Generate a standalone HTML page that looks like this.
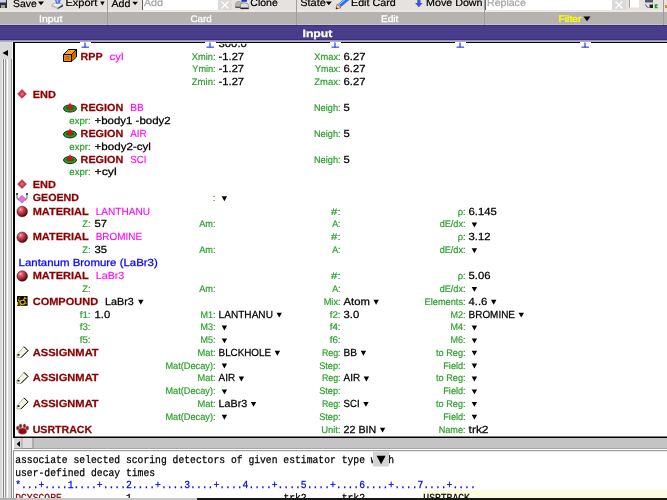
<!DOCTYPE html>
<html><head><meta charset="utf-8"><style>
html,body{margin:0;padding:0;width:667px;height:500px;overflow:hidden;background:#fff}
svg{display:block;text-rendering:geometricPrecision;will-change:transform}
</style></head><body>
<svg width="667" height="500" viewBox="0 0 667 500">
<rect x="0" y="0" width="667" height="500" fill="#ffffff"/>
<rect x="0" y="0" width="667" height="12" fill="#e6e2e0"/>
<rect x="0" y="10.5" width="667" height="1" fill="#f0eeec"/>
<rect x="0" y="12" width="667" height="12" fill="#b6b2b0"/>
<rect x="0" y="24" width="667" height="1" fill="#c8c6bc"/>
<rect x="0" y="25" width="667" height="15" fill="#483d8b"/>
<rect x="0" y="25" width="667" height="1" fill="#3a2d88"/>
<rect x="0" y="39" width="667" height="1" fill="#3a2d88"/>
<rect x="0" y="40" width="667" height="1" fill="#9890d0"/>
<rect x="0" y="41" width="667" height="1" fill="#b4b2a8"/>
<rect x="0" y="42" width="13" height="458" fill="#d9d9d9"/>
<rect x="12" y="42" width="1" height="17" fill="#f4f4f4"/>
<rect x="2" y="59" width="1" height="441" fill="#f0f0f0"/>
<rect x="3" y="59" width="1" height="441" fill="#808080"/>
<rect x="4" y="59" width="1" height="441" fill="#f8f8f8"/>
<rect x="5" y="59" width="1" height="441" fill="#a0a0a0"/>
<rect x="7" y="59" width="1" height="441" fill="#ffffff"/>
<rect x="8" y="59" width="1" height="441" fill="#dcdcdc"/>
<rect x="9" y="59" width="1" height="441" fill="#dcdcdc"/>
<rect x="11" y="59" width="1" height="441" fill="#909090"/>
<rect x="12" y="59" width="1" height="441" fill="#ffffff"/>
<path d="M2.5 53L8 50V56Z" fill="#000"/>
<rect x="13" y="42" width="654" height="1" fill="#000"/>
<rect x="13" y="42" width="2" height="396" fill="#000"/>
<rect x="13" y="436.5" width="654" height="1.5" fill="#000"/>
<rect x="80" y="42" width="11" height="1" fill="#fff"/>
<rect x="84.4" y="42.5" width="1.2" height="5" fill="#2038ff"/>
<rect x="81.5" y="46.6" width="7.6" height="1.1" fill="#2038ff"/>
<rect x="205" y="42" width="11" height="1" fill="#fff"/>
<rect x="209.4" y="42.5" width="1.2" height="5" fill="#2038ff"/>
<rect x="206.5" y="46.6" width="7.6" height="1.1" fill="#2038ff"/>
<rect x="330" y="42" width="11" height="1" fill="#fff"/>
<rect x="334.4" y="42.5" width="1.2" height="5" fill="#2038ff"/>
<rect x="331.5" y="46.6" width="7.6" height="1.1" fill="#2038ff"/>
<rect x="455" y="42" width="11" height="1" fill="#fff"/>
<rect x="459.4" y="42.5" width="1.2" height="5" fill="#2038ff"/>
<rect x="456.5" y="46.6" width="7.6" height="1.1" fill="#2038ff"/>
<rect x="580" y="42" width="11" height="1" fill="#fff"/>
<rect x="584.4" y="42.5" width="1.2" height="5" fill="#2038ff"/>
<rect x="581.5" y="46.6" width="7.6" height="1.1" fill="#2038ff"/>
<rect x="14" y="438" width="653" height="11" fill="#c4c4c4"/>
<rect x="14" y="448" width="653" height="1" fill="#a8a8a8"/>
<rect x="14" y="438" width="8" height="11" fill="#d8d8d8"/>
<path d="M16.7 444L20 441V447Z" fill="#000"/>
<rect x="21.5" y="438" width="1" height="11" fill="#909090"/>
<rect x="22.5" y="438" width="10" height="10" fill="#dcdcdc"/>
<rect x="32.5" y="438" width="1" height="11" fill="#909090"/>
<rect x="22.5" y="448" width="10" height="1" fill="#909090"/>
<rect x="14" y="448" width="8" height="1" fill="#a0a0a0"/>
<rect x="13" y="449" width="654" height="1" fill="#ffffff"/>
<rect x="13" y="450" width="654" height="1.5" fill="#a0a0a0"/>
<rect x="13" y="451.5" width="654" height="47.5" fill="#ffffff"/>
<rect x="13" y="451" width="1" height="48" fill="#909090"/>
<rect x="423" y="490" width="244" height="8.5" fill="#fdfbe0"/>
<rect x="0" y="499" width="197" height="1" fill="#c0c0c0"/>
<rect x="197" y="499" width="470" height="1" fill="#202020"/>
<rect x="0" y="0" width="7" height="8" fill="#303030"/><rect x="0" y="0" width="6" height="2.5" fill="#c8d0f0"/><rect x="1" y="5" width="4" height="3" fill="#a0a0a0"/>
<text x="13.00" y="6.60" font-family='"Liberation Sans",sans-serif' font-size="10.19" fill="#000" text-anchor="start" textLength="23.81" lengthAdjust="spacingAndGlyphs" xml:space="preserve" stroke="#000" stroke-width="0.2">Save</text>
<path d="M38.00 1.60h6.00l-3.00 3.60z" fill="#000"/>
<path d="M51.5 5L56.5 2.5L63 4.5L57.5 8Z" fill="#ececec" stroke="#a0a0a0" stroke-width="0.6"/><path d="M57.5 8L63 4.5V6.5L57.5 9.2Z" fill="#484848"/><path d="M51.5 5V6.2L57.5 9.2V8Z" fill="#b8b8b8"/><path d="M55 0H60.8L59.5 3.8H56.2Z" fill="#5a70e0"/><path d="M56.5 0H58.5L58 2.5H57Z" fill="#a8c0ff"/>
<text x="65.50" y="5.90" font-family='"Liberation Sans",sans-serif' font-size="10.19" fill="#000" text-anchor="start" textLength="31.75" lengthAdjust="spacingAndGlyphs" xml:space="preserve" stroke="#000" stroke-width="0.2">Export</text>
<path d="M100.20 1.50h4.40l-2.20 4.00z" fill="#000"/>
<rect x="107" y="0" width="1" height="25" fill="#a09c9a"/>
<text x="111.50" y="6.60" font-family='"Liberation Sans",sans-serif' font-size="10.19" fill="#000" text-anchor="start" textLength="18.95" lengthAdjust="spacingAndGlyphs" xml:space="preserve" stroke="#000" stroke-width="0.2">Add</text>
<path d="M132.20 1.70h5.80l-2.90 3.40z" fill="#000"/>
<rect x="142" y="0" width="76" height="10" fill="#ffffff"/>
<rect x="142" y="0" width="1" height="10" fill="#606060"/>
<text x="144.00" y="6.30" font-family='"Liberation Sans",sans-serif' font-size="10.19" fill="#a8a8a8" text-anchor="start" textLength="18.95" lengthAdjust="spacingAndGlyphs" xml:space="preserve" stroke="#a8a8a8" stroke-width="0.25">Add</text>
<rect x="218" y="0" width="14" height="10" fill="#dcdad8"/>
<path d="M221.5 1.5L228.5 8.5M228.5 1.5L221.5 8.5" stroke="#ffffff" stroke-width="1.2"/>
<path d="M235.5 7.6V4Q235.5 1.4 239 1.4Q242.6 1.4 242.6 4V7.6Z" fill="#b4b4b4" stroke="#808080" stroke-width="0.5"/><rect x="235.5" y="6.6" width="7" height="1.2" fill="#404040"/><path d="M240.5 8.8V5.6Q240.5 2.8 244.6 2.8Q248.6 2.8 248.6 5.6V8.8Z" fill="#dcdcdc" stroke="#707070" stroke-width="0.6"/><rect x="240.5" y="7.6" width="8.1" height="1.4" fill="#202020"/><rect x="241.5" y="0" width="5.4" height="1.8" fill="#1a30d0"/>
<text x="250.30" y="5.90" font-family='"Liberation Sans",sans-serif' font-size="10.19" fill="#000" text-anchor="start" textLength="27.52" lengthAdjust="spacingAndGlyphs" xml:space="preserve" stroke="#000" stroke-width="0.2">Clone</text>
<rect x="296" y="0" width="1" height="25" fill="#a09c9a"/>
<text x="300.20" y="6.10" font-family='"Liberation Sans",sans-serif' font-size="10.19" fill="#000" text-anchor="start" textLength="25.68" lengthAdjust="spacingAndGlyphs" xml:space="preserve" stroke="#000" stroke-width="0.2">State</text>
<path d="M325.80 1.60h6.00l-3.00 3.60z" fill="#000"/>
<path d="M339.5 5.5L348 -1.5" stroke="#2a70e8" stroke-width="4.2"/><path d="M339 4.5L346.5 -1.5" stroke="#a8d8ff" stroke-width="1"/><path d="M336 9L337.2 4.2L341 7.6Z" fill="#f0e0c0" stroke="#a06020" stroke-width="0.8"/><path d="M336 9L336.6 7.2L338 8.2Z" fill="#000"/>
<text x="351.00" y="5.80" font-family='"Liberation Sans",sans-serif' font-size="10.19" fill="#000" text-anchor="start" textLength="44.73" lengthAdjust="spacingAndGlyphs" xml:space="preserve" stroke="#000" stroke-width="0.2">Edit Card</text>
<path d="M417.3 0H420.5V3H422.6L418.9 7.3L415 3H417.3Z" fill="#3858e0"/>
<text x="426.00" y="5.90" font-family='"Liberation Sans",sans-serif' font-size="10.19" fill="#000" text-anchor="start" textLength="56.58" lengthAdjust="spacingAndGlyphs" xml:space="preserve" stroke="#000" stroke-width="0.2">Move Down</text>
<rect x="484" y="0" width="1" height="25" fill="#a09c9a"/>
<rect x="485" y="0" width="127" height="10" fill="#ffffff"/>
<rect x="485" y="0" width="1" height="10" fill="#606060"/>
<text x="487.00" y="6.30" font-family='"Liberation Sans",sans-serif' font-size="10.19" fill="#a8a8a8" text-anchor="start" textLength="38.80" lengthAdjust="spacingAndGlyphs" xml:space="preserve" stroke="#a8a8a8" stroke-width="0.25">Replace</text>
<rect x="612" y="0" width="14" height="10" fill="#dcdad8"/>
<path d="M615.5 1.5L622.5 8.5M622.5 1.5L615.5 8.5" stroke="#ffffff" stroke-width="1.2"/>
<rect x="629" y="0" width="10" height="7.5" fill="#ffffff"/>
<rect x="629" y="0" width="1" height="7.5" fill="#a0a0a0"/>
<rect x="645" y="0" width="8" height="2.5" fill="#505868"/><path d="M645.5 4.5Q646 7 648.5 7.5" stroke="#3050a0" stroke-width="1" fill="none"/><rect x="649.5" y="4.5" width="3.5" height="3.5" fill="#202020"/><path d="M657.5 5H655.5V7.5H657.5" stroke="#10a010" stroke-width="1.5" fill="none"/>
<rect x="663" y="0" width="1" height="25" fill="#a09c9a"/>
<rect x="665" y="5" width="2" height="3" fill="#e08020"/>
<text x="39.00" y="22.00" font-family='"Liberation Sans",sans-serif' font-size="9.45" fill="#ffffff" text-anchor="start" textLength="23.30" lengthAdjust="spacingAndGlyphs" xml:space="preserve" stroke="#ffffff" stroke-width="0.3">Input</text>
<text x="190.50" y="22.00" font-family='"Liberation Sans",sans-serif' font-size="9.45" fill="#ffffff" text-anchor="start" textLength="21.21" lengthAdjust="spacingAndGlyphs" xml:space="preserve" stroke="#ffffff" stroke-width="0.3">Card</text>
<text x="381.00" y="22.00" font-family='"Liberation Sans",sans-serif' font-size="9.45" fill="#ffffff" text-anchor="start" textLength="17.43" lengthAdjust="spacingAndGlyphs" xml:space="preserve" stroke="#ffffff" stroke-width="0.3">Edit</text>
<text x="558.50" y="22.00" font-family='"Liberation Sans",sans-serif' font-size="9.45" fill="#ffff00" text-anchor="start" textLength="22.94" lengthAdjust="spacingAndGlyphs" xml:space="preserve" stroke="#ffff00" stroke-width="0.3">Filter</text>
<path d="M583.50 16.60h7.00l-3.50 4.60z" fill="#000"/>
<text x="302.50" y="36.60" font-family='"Liberation Sans",sans-serif' font-size="10.50" font-weight="bold" fill="#ffffff" text-anchor="start" textLength="29.90" lengthAdjust="spacingAndGlyphs" xml:space="preserve" stroke="#ffffff" stroke-width="0.25">Input</text>
<defs><clipPath id="cc"><rect x="15" y="43.8" width="652" height="392.7"/></clipPath><clipPath id="tc"><rect x="14" y="451.5" width="653" height="46.5"/></clipPath></defs>
<g clip-path="url(#cc)">
<text x="218.60" y="46.62" font-family='"Liberation Sans",sans-serif' font-size="10.34" fill="#000" text-anchor="start" textLength="28.20" lengthAdjust="spacingAndGlyphs" xml:space="preserve" stroke="#000" stroke-width="0.25">300.0</text>
<text x="80.60" y="59.50" font-family='"Liberation Sans",sans-serif' font-size="10.34" font-weight="bold" fill="#8b0000" text-anchor="start" textLength="22.02" lengthAdjust="spacingAndGlyphs" xml:space="preserve" stroke="#8b0000" stroke-width="0.25">RPP</text>
<text x="109.62" y="59.50" font-family='"Liberation Sans",sans-serif' font-size="10.34" fill="#ff00ff" text-anchor="start" textLength="13.98" lengthAdjust="spacingAndGlyphs" xml:space="preserve" stroke="#ff00ff" stroke-width="0.12">cyl</text>
<text x="215.60" y="59.50" font-family='"Liberation Sans",sans-serif' font-size="9.60" fill="#2aa02a" text-anchor="end" textLength="23.84" lengthAdjust="spacingAndGlyphs" xml:space="preserve" stroke="#2aa02a" stroke-width="0.18">Xmin:</text>
<text x="218.60" y="59.50" font-family='"Liberation Sans",sans-serif' font-size="10.34" fill="#000" text-anchor="start" textLength="25.49" lengthAdjust="spacingAndGlyphs" xml:space="preserve" stroke="#000" stroke-width="0.25">-1.27</text>
<text x="340.60" y="59.50" font-family='"Liberation Sans",sans-serif' font-size="9.60" fill="#2aa02a" text-anchor="end" textLength="26.25" lengthAdjust="spacingAndGlyphs" xml:space="preserve" stroke="#2aa02a" stroke-width="0.18">Xmax:</text>
<text x="343.60" y="59.50" font-family='"Liberation Sans",sans-serif' font-size="10.34" fill="#000" text-anchor="start" textLength="21.93" lengthAdjust="spacingAndGlyphs" xml:space="preserve" stroke="#000" stroke-width="0.25">6.27</text>
<text x="215.60" y="72.38" font-family='"Liberation Sans",sans-serif' font-size="9.60" fill="#2aa02a" text-anchor="end" textLength="23.23" lengthAdjust="spacingAndGlyphs" xml:space="preserve" stroke="#2aa02a" stroke-width="0.18">Ymin:</text>
<text x="218.60" y="72.38" font-family='"Liberation Sans",sans-serif' font-size="10.34" fill="#000" text-anchor="start" textLength="25.49" lengthAdjust="spacingAndGlyphs" xml:space="preserve" stroke="#000" stroke-width="0.25">-1.27</text>
<text x="340.60" y="72.38" font-family='"Liberation Sans",sans-serif' font-size="9.60" fill="#2aa02a" text-anchor="end" textLength="25.64" lengthAdjust="spacingAndGlyphs" xml:space="preserve" stroke="#2aa02a" stroke-width="0.18">Ymax:</text>
<text x="343.60" y="72.38" font-family='"Liberation Sans",sans-serif' font-size="10.34" fill="#000" text-anchor="start" textLength="21.93" lengthAdjust="spacingAndGlyphs" xml:space="preserve" stroke="#000" stroke-width="0.25">6.27</text>
<text x="215.60" y="85.26" font-family='"Liberation Sans",sans-serif' font-size="9.60" fill="#2aa02a" text-anchor="end" textLength="23.84" lengthAdjust="spacingAndGlyphs" xml:space="preserve" stroke="#2aa02a" stroke-width="0.18">Zmin:</text>
<text x="218.60" y="85.26" font-family='"Liberation Sans",sans-serif' font-size="10.34" fill="#000" text-anchor="start" textLength="25.49" lengthAdjust="spacingAndGlyphs" xml:space="preserve" stroke="#000" stroke-width="0.25">-1.27</text>
<text x="340.60" y="85.26" font-family='"Liberation Sans",sans-serif' font-size="9.60" fill="#2aa02a" text-anchor="end" textLength="26.25" lengthAdjust="spacingAndGlyphs" xml:space="preserve" stroke="#2aa02a" stroke-width="0.18">Zmax:</text>
<text x="343.60" y="85.26" font-family='"Liberation Sans",sans-serif' font-size="10.34" fill="#000" text-anchor="start" textLength="21.93" lengthAdjust="spacingAndGlyphs" xml:space="preserve" stroke="#000" stroke-width="0.25">6.27</text>
<text x="32.70" y="98.14" font-family='"Liberation Sans",sans-serif' font-size="10.34" font-weight="bold" fill="#8b0000" text-anchor="start" textLength="23.15" lengthAdjust="spacingAndGlyphs" xml:space="preserve" stroke="#8b0000" stroke-width="0.25">END</text>
<text x="80.60" y="111.02" font-family='"Liberation Sans",sans-serif' font-size="10.34" font-weight="bold" fill="#8b0000" text-anchor="start" textLength="42.68" lengthAdjust="spacingAndGlyphs" xml:space="preserve" stroke="#8b0000" stroke-width="0.25">REGION</text>
<text x="130.28" y="111.02" font-family='"Liberation Sans",sans-serif' font-size="10.34" fill="#ff00ff" text-anchor="start" textLength="13.51" lengthAdjust="spacingAndGlyphs" xml:space="preserve" stroke="#ff00ff" stroke-width="0.12">BB</text>
<text x="340.60" y="111.02" font-family='"Liberation Sans",sans-serif' font-size="9.60" fill="#2aa02a" text-anchor="end" textLength="26.62" lengthAdjust="spacingAndGlyphs" xml:space="preserve" stroke="#2aa02a" stroke-width="0.18">Neigh:</text>
<text x="343.60" y="111.02" font-family='"Liberation Sans",sans-serif' font-size="10.34" fill="#000" text-anchor="start" textLength="6.27" lengthAdjust="spacingAndGlyphs" xml:space="preserve" stroke="#000" stroke-width="0.25">5</text>
<text x="90.60" y="123.90" font-family='"Liberation Sans",sans-serif' font-size="9.60" fill="#2aa02a" text-anchor="end" textLength="21.24" lengthAdjust="spacingAndGlyphs" xml:space="preserve" stroke="#2aa02a" stroke-width="0.18">expr:</text>
<text x="94.50" y="123.90" font-family='"Liberation Sans",sans-serif' font-size="10.34" fill="#000" text-anchor="start" textLength="76.19" lengthAdjust="spacingAndGlyphs" xml:space="preserve" stroke="#000" stroke-width="0.25">+body1 -body2</text>
<text x="80.60" y="136.78" font-family='"Liberation Sans",sans-serif' font-size="10.34" font-weight="bold" fill="#8b0000" text-anchor="start" textLength="42.68" lengthAdjust="spacingAndGlyphs" xml:space="preserve" stroke="#8b0000" stroke-width="0.25">REGION</text>
<text x="130.28" y="136.78" font-family='"Liberation Sans",sans-serif' font-size="10.34" fill="#ff00ff" text-anchor="start" textLength="16.49" lengthAdjust="spacingAndGlyphs" xml:space="preserve" stroke="#ff00ff" stroke-width="0.12">AIR</text>
<text x="340.60" y="136.78" font-family='"Liberation Sans",sans-serif' font-size="9.60" fill="#2aa02a" text-anchor="end" textLength="26.62" lengthAdjust="spacingAndGlyphs" xml:space="preserve" stroke="#2aa02a" stroke-width="0.18">Neigh:</text>
<text x="343.60" y="136.78" font-family='"Liberation Sans",sans-serif' font-size="10.34" fill="#000" text-anchor="start" textLength="6.27" lengthAdjust="spacingAndGlyphs" xml:space="preserve" stroke="#000" stroke-width="0.25">5</text>
<text x="90.60" y="149.66" font-family='"Liberation Sans",sans-serif' font-size="9.60" fill="#2aa02a" text-anchor="end" textLength="21.24" lengthAdjust="spacingAndGlyphs" xml:space="preserve" stroke="#2aa02a" stroke-width="0.18">expr:</text>
<text x="94.50" y="149.66" font-family='"Liberation Sans",sans-serif' font-size="10.34" fill="#000" text-anchor="start" textLength="56.42" lengthAdjust="spacingAndGlyphs" xml:space="preserve" stroke="#000" stroke-width="0.25">+body2-cyl</text>
<text x="80.60" y="162.54" font-family='"Liberation Sans",sans-serif' font-size="10.34" font-weight="bold" fill="#8b0000" text-anchor="start" textLength="42.68" lengthAdjust="spacingAndGlyphs" xml:space="preserve" stroke="#8b0000" stroke-width="0.25">REGION</text>
<text x="130.28" y="162.54" font-family='"Liberation Sans",sans-serif' font-size="10.34" fill="#ff00ff" text-anchor="start" textLength="16.04" lengthAdjust="spacingAndGlyphs" xml:space="preserve" stroke="#ff00ff" stroke-width="0.12">SCI</text>
<text x="340.60" y="162.54" font-family='"Liberation Sans",sans-serif' font-size="9.60" fill="#2aa02a" text-anchor="end" textLength="26.62" lengthAdjust="spacingAndGlyphs" xml:space="preserve" stroke="#2aa02a" stroke-width="0.18">Neigh:</text>
<text x="343.60" y="162.54" font-family='"Liberation Sans",sans-serif' font-size="10.34" fill="#000" text-anchor="start" textLength="6.27" lengthAdjust="spacingAndGlyphs" xml:space="preserve" stroke="#000" stroke-width="0.25">5</text>
<text x="90.60" y="175.42" font-family='"Liberation Sans",sans-serif' font-size="9.60" fill="#2aa02a" text-anchor="end" textLength="21.24" lengthAdjust="spacingAndGlyphs" xml:space="preserve" stroke="#2aa02a" stroke-width="0.18">expr:</text>
<text x="94.50" y="175.42" font-family='"Liberation Sans",sans-serif' font-size="10.34" fill="#000" text-anchor="start" textLength="22.23" lengthAdjust="spacingAndGlyphs" xml:space="preserve" stroke="#000" stroke-width="0.25">+cyl</text>
<text x="32.70" y="188.30" font-family='"Liberation Sans",sans-serif' font-size="10.34" font-weight="bold" fill="#8b0000" text-anchor="start" textLength="23.15" lengthAdjust="spacingAndGlyphs" xml:space="preserve" stroke="#8b0000" stroke-width="0.25">END</text>
<text x="32.70" y="201.18" font-family='"Liberation Sans",sans-serif' font-size="10.34" font-weight="bold" fill="#8b0000" text-anchor="start" textLength="46.34" lengthAdjust="spacingAndGlyphs" xml:space="preserve" stroke="#8b0000" stroke-width="0.25">GEOEND</text>
<text x="215.60" y="201.18" font-family='"Liberation Sans",sans-serif' font-size="9.60" fill="#2aa02a" text-anchor="end" textLength="2.76" lengthAdjust="spacingAndGlyphs" xml:space="preserve" stroke="#2aa02a" stroke-width="0.18">:</text>
<path d="M221.70 196.28h5.40l-2.70 4.90z" fill="#000"/>
<text x="32.70" y="214.56" font-family='"Liberation Sans",sans-serif' font-size="10.34" font-weight="bold" fill="#8b0000" text-anchor="start" textLength="56.02" lengthAdjust="spacingAndGlyphs" xml:space="preserve" stroke="#8b0000" stroke-width="0.25">MATERIAL</text>
<text x="95.72" y="214.56" font-family='"Liberation Sans",sans-serif' font-size="10.34" fill="#ff00ff" text-anchor="start" textLength="54.33" lengthAdjust="spacingAndGlyphs" xml:space="preserve" stroke="#ff00ff" stroke-width="0.12">LANTHANU</text>
<text x="340.60" y="214.56" font-family='"Liberation Sans",sans-serif' font-size="9.60" fill="#2aa02a" text-anchor="end" textLength="9.63" lengthAdjust="spacingAndGlyphs" xml:space="preserve" stroke="#2aa02a" stroke-width="0.18">#:</text>
<text x="465.60" y="214.56" font-family='"Liberation Sans",sans-serif' font-size="9.60" fill="#2aa02a" text-anchor="end" textLength="7.97" lengthAdjust="spacingAndGlyphs" xml:space="preserve" stroke="#2aa02a" stroke-width="0.18">ρ:</text>
<text x="468.60" y="214.56" font-family='"Liberation Sans",sans-serif' font-size="10.34" fill="#000" text-anchor="start" textLength="28.20" lengthAdjust="spacingAndGlyphs" xml:space="preserve" stroke="#000" stroke-width="0.25">6.145</text>
<text x="90.60" y="227.44" font-family='"Liberation Sans",sans-serif' font-size="9.60" fill="#2aa02a" text-anchor="end" textLength="8.38" lengthAdjust="spacingAndGlyphs" xml:space="preserve" stroke="#2aa02a" stroke-width="0.18">Z:</text>
<text x="94.50" y="227.44" font-family='"Liberation Sans",sans-serif' font-size="10.34" fill="#000" text-anchor="start" textLength="12.53" lengthAdjust="spacingAndGlyphs" xml:space="preserve" stroke="#000" stroke-width="0.25">57</text>
<text x="215.60" y="227.44" font-family='"Liberation Sans",sans-serif' font-size="9.60" fill="#2aa02a" text-anchor="end" textLength="16.36" lengthAdjust="spacingAndGlyphs" xml:space="preserve" stroke="#2aa02a" stroke-width="0.18">Am:</text>
<text x="340.60" y="227.44" font-family='"Liberation Sans",sans-serif' font-size="9.60" fill="#2aa02a" text-anchor="end" textLength="8.37" lengthAdjust="spacingAndGlyphs" xml:space="preserve" stroke="#2aa02a" stroke-width="0.18">A:</text>
<text x="465.60" y="227.44" font-family='"Liberation Sans",sans-serif' font-size="9.60" fill="#2aa02a" text-anchor="end" textLength="25.97" lengthAdjust="spacingAndGlyphs" xml:space="preserve" stroke="#2aa02a" stroke-width="0.18">dE/dx:</text>
<path d="M471.70 222.54h5.40l-2.70 4.90z" fill="#000"/>
<text x="32.70" y="240.32" font-family='"Liberation Sans",sans-serif' font-size="10.34" font-weight="bold" fill="#8b0000" text-anchor="start" textLength="56.02" lengthAdjust="spacingAndGlyphs" xml:space="preserve" stroke="#8b0000" stroke-width="0.25">MATERIAL</text>
<text x="95.72" y="240.32" font-family='"Liberation Sans",sans-serif' font-size="10.34" fill="#ff00ff" text-anchor="start" textLength="46.35" lengthAdjust="spacingAndGlyphs" xml:space="preserve" stroke="#ff00ff" stroke-width="0.12">BROMINE</text>
<text x="340.60" y="240.32" font-family='"Liberation Sans",sans-serif' font-size="9.60" fill="#2aa02a" text-anchor="end" textLength="9.63" lengthAdjust="spacingAndGlyphs" xml:space="preserve" stroke="#2aa02a" stroke-width="0.18">#:</text>
<text x="465.60" y="240.32" font-family='"Liberation Sans",sans-serif' font-size="9.60" fill="#2aa02a" text-anchor="end" textLength="7.97" lengthAdjust="spacingAndGlyphs" xml:space="preserve" stroke="#2aa02a" stroke-width="0.18">ρ:</text>
<text x="468.60" y="240.32" font-family='"Liberation Sans",sans-serif' font-size="10.34" fill="#000" text-anchor="start" textLength="21.93" lengthAdjust="spacingAndGlyphs" xml:space="preserve" stroke="#000" stroke-width="0.25">3.12</text>
<text x="90.60" y="253.20" font-family='"Liberation Sans",sans-serif' font-size="9.60" fill="#2aa02a" text-anchor="end" textLength="8.38" lengthAdjust="spacingAndGlyphs" xml:space="preserve" stroke="#2aa02a" stroke-width="0.18">Z:</text>
<text x="94.50" y="253.20" font-family='"Liberation Sans",sans-serif' font-size="10.34" fill="#000" text-anchor="start" textLength="12.53" lengthAdjust="spacingAndGlyphs" xml:space="preserve" stroke="#000" stroke-width="0.25">35</text>
<text x="215.60" y="253.20" font-family='"Liberation Sans",sans-serif' font-size="9.60" fill="#2aa02a" text-anchor="end" textLength="16.36" lengthAdjust="spacingAndGlyphs" xml:space="preserve" stroke="#2aa02a" stroke-width="0.18">Am:</text>
<text x="340.60" y="253.20" font-family='"Liberation Sans",sans-serif' font-size="9.60" fill="#2aa02a" text-anchor="end" textLength="8.37" lengthAdjust="spacingAndGlyphs" xml:space="preserve" stroke="#2aa02a" stroke-width="0.18">A:</text>
<text x="465.60" y="253.20" font-family='"Liberation Sans",sans-serif' font-size="9.60" fill="#2aa02a" text-anchor="end" textLength="25.97" lengthAdjust="spacingAndGlyphs" xml:space="preserve" stroke="#2aa02a" stroke-width="0.18">dE/dx:</text>
<path d="M471.70 248.30h5.40l-2.70 4.90z" fill="#000"/>
<text x="32.70" y="278.96" font-family='"Liberation Sans",sans-serif' font-size="10.34" font-weight="bold" fill="#8b0000" text-anchor="start" textLength="56.02" lengthAdjust="spacingAndGlyphs" xml:space="preserve" stroke="#8b0000" stroke-width="0.25">MATERIAL</text>
<text x="95.72" y="278.96" font-family='"Liberation Sans",sans-serif' font-size="10.34" fill="#ff00ff" text-anchor="start" textLength="28.60" lengthAdjust="spacingAndGlyphs" xml:space="preserve" stroke="#ff00ff" stroke-width="0.12">LaBr3</text>
<text x="340.60" y="278.96" font-family='"Liberation Sans",sans-serif' font-size="9.60" fill="#2aa02a" text-anchor="end" textLength="9.63" lengthAdjust="spacingAndGlyphs" xml:space="preserve" stroke="#2aa02a" stroke-width="0.18">#:</text>
<text x="465.60" y="278.96" font-family='"Liberation Sans",sans-serif' font-size="9.60" fill="#2aa02a" text-anchor="end" textLength="7.97" lengthAdjust="spacingAndGlyphs" xml:space="preserve" stroke="#2aa02a" stroke-width="0.18">ρ:</text>
<text x="468.60" y="278.96" font-family='"Liberation Sans",sans-serif' font-size="10.34" fill="#000" text-anchor="start" textLength="21.93" lengthAdjust="spacingAndGlyphs" xml:space="preserve" stroke="#000" stroke-width="0.25">5.06</text>
<text x="90.60" y="291.84" font-family='"Liberation Sans",sans-serif' font-size="9.60" fill="#2aa02a" text-anchor="end" textLength="8.38" lengthAdjust="spacingAndGlyphs" xml:space="preserve" stroke="#2aa02a" stroke-width="0.18">Z:</text>
<text x="215.60" y="291.84" font-family='"Liberation Sans",sans-serif' font-size="9.60" fill="#2aa02a" text-anchor="end" textLength="16.36" lengthAdjust="spacingAndGlyphs" xml:space="preserve" stroke="#2aa02a" stroke-width="0.18">Am:</text>
<text x="340.60" y="291.84" font-family='"Liberation Sans",sans-serif' font-size="9.60" fill="#2aa02a" text-anchor="end" textLength="8.37" lengthAdjust="spacingAndGlyphs" xml:space="preserve" stroke="#2aa02a" stroke-width="0.18">A:</text>
<text x="465.60" y="291.84" font-family='"Liberation Sans",sans-serif' font-size="9.60" fill="#2aa02a" text-anchor="end" textLength="25.97" lengthAdjust="spacingAndGlyphs" xml:space="preserve" stroke="#2aa02a" stroke-width="0.18">dE/dx:</text>
<path d="M471.70 286.94h5.40l-2.70 4.90z" fill="#000"/>
<text x="18.60" y="266.08" font-family='"Liberation Sans",sans-serif' font-size="10.34" fill="#0000ff" text-anchor="start" textLength="139.20" lengthAdjust="spacingAndGlyphs" xml:space="preserve" stroke="#0000ff" stroke-width="0.25">Lantanum Bromure (LaBr3)</text>
<text x="32.70" y="304.72" font-family='"Liberation Sans",sans-serif' font-size="10.34" font-weight="bold" fill="#8b0000" text-anchor="start" textLength="65.41" lengthAdjust="spacingAndGlyphs" xml:space="preserve" stroke="#8b0000" stroke-width="0.25">COMPOUND</text>
<text x="105.11" y="304.72" font-family='"Liberation Sans",sans-serif' font-size="10.34" fill="#000" text-anchor="start" textLength="28.60" lengthAdjust="spacingAndGlyphs" xml:space="preserve" stroke="#000" stroke-width="0.25">LaBr3</text>
<path d="M138.11 299.82h5.40l-2.70 4.90z" fill="#000"/>
<text x="340.60" y="304.72" font-family='"Liberation Sans",sans-serif' font-size="9.60" fill="#2aa02a" text-anchor="end" textLength="16.97" lengthAdjust="spacingAndGlyphs" xml:space="preserve" stroke="#2aa02a" stroke-width="0.18">Mix:</text>
<text x="343.60" y="304.72" font-family='"Liberation Sans",sans-serif' font-size="10.34" fill="#000" text-anchor="start" textLength="26.22" lengthAdjust="spacingAndGlyphs" xml:space="preserve" stroke="#000" stroke-width="0.25">Atom</text>
<path d="M373.42 299.82h5.40l-2.70 4.90z" fill="#000"/>
<text x="465.60" y="304.72" font-family='"Liberation Sans",sans-serif' font-size="9.60" fill="#2aa02a" text-anchor="end" textLength="40.98" lengthAdjust="spacingAndGlyphs" xml:space="preserve" stroke="#2aa02a" stroke-width="0.18">Elements:</text>
<text x="468.60" y="304.72" font-family='"Liberation Sans",sans-serif' font-size="10.34" fill="#000" text-anchor="start" textLength="18.80" lengthAdjust="spacingAndGlyphs" xml:space="preserve" stroke="#000" stroke-width="0.25">4..6</text>
<path d="M491.00 299.82h5.40l-2.70 4.90z" fill="#000"/>
<text x="90.60" y="317.60" font-family='"Liberation Sans",sans-serif' font-size="9.60" fill="#2aa02a" text-anchor="end" textLength="10.87" lengthAdjust="spacingAndGlyphs" xml:space="preserve" stroke="#2aa02a" stroke-width="0.18">f1:</text>
<text x="94.50" y="317.60" font-family='"Liberation Sans",sans-serif' font-size="10.34" fill="#000" text-anchor="start" textLength="15.66" lengthAdjust="spacingAndGlyphs" xml:space="preserve" stroke="#000" stroke-width="0.25">1.0</text>
<text x="215.60" y="317.60" font-family='"Liberation Sans",sans-serif' font-size="9.60" fill="#2aa02a" text-anchor="end" textLength="15.05" lengthAdjust="spacingAndGlyphs" xml:space="preserve" stroke="#2aa02a" stroke-width="0.18">M1:</text>
<text x="218.60" y="317.60" font-family='"Liberation Sans",sans-serif' font-size="10.34" fill="#000" text-anchor="start" textLength="54.33" lengthAdjust="spacingAndGlyphs" xml:space="preserve" stroke="#000" stroke-width="0.25">LANTHANU</text>
<path d="M276.53 312.70h5.40l-2.70 4.90z" fill="#000"/>
<text x="340.60" y="317.60" font-family='"Liberation Sans",sans-serif' font-size="9.60" fill="#2aa02a" text-anchor="end" textLength="10.87" lengthAdjust="spacingAndGlyphs" xml:space="preserve" stroke="#2aa02a" stroke-width="0.18">f2:</text>
<text x="343.60" y="317.60" font-family='"Liberation Sans",sans-serif' font-size="10.34" fill="#000" text-anchor="start" textLength="15.66" lengthAdjust="spacingAndGlyphs" xml:space="preserve" stroke="#000" stroke-width="0.25">3.0</text>
<text x="465.60" y="317.60" font-family='"Liberation Sans",sans-serif' font-size="9.60" fill="#2aa02a" text-anchor="end" textLength="15.05" lengthAdjust="spacingAndGlyphs" xml:space="preserve" stroke="#2aa02a" stroke-width="0.18">M2:</text>
<text x="468.60" y="317.60" font-family='"Liberation Sans",sans-serif' font-size="10.34" fill="#000" text-anchor="start" textLength="46.35" lengthAdjust="spacingAndGlyphs" xml:space="preserve" stroke="#000" stroke-width="0.25">BROMINE</text>
<path d="M518.55 312.70h5.40l-2.70 4.90z" fill="#000"/>
<text x="90.60" y="330.48" font-family='"Liberation Sans",sans-serif' font-size="9.60" fill="#2aa02a" text-anchor="end" textLength="10.87" lengthAdjust="spacingAndGlyphs" xml:space="preserve" stroke="#2aa02a" stroke-width="0.18">f3:</text>
<text x="215.60" y="330.48" font-family='"Liberation Sans",sans-serif' font-size="9.60" fill="#2aa02a" text-anchor="end" textLength="15.05" lengthAdjust="spacingAndGlyphs" xml:space="preserve" stroke="#2aa02a" stroke-width="0.18">M3:</text>
<path d="M221.70 325.58h5.40l-2.70 4.90z" fill="#000"/>
<text x="340.60" y="330.48" font-family='"Liberation Sans",sans-serif' font-size="9.60" fill="#2aa02a" text-anchor="end" textLength="10.87" lengthAdjust="spacingAndGlyphs" xml:space="preserve" stroke="#2aa02a" stroke-width="0.18">f4:</text>
<text x="465.60" y="330.48" font-family='"Liberation Sans",sans-serif' font-size="9.60" fill="#2aa02a" text-anchor="end" textLength="15.05" lengthAdjust="spacingAndGlyphs" xml:space="preserve" stroke="#2aa02a" stroke-width="0.18">M4:</text>
<path d="M471.70 325.58h5.40l-2.70 4.90z" fill="#000"/>
<text x="90.60" y="343.36" font-family='"Liberation Sans",sans-serif' font-size="9.60" fill="#2aa02a" text-anchor="end" textLength="10.87" lengthAdjust="spacingAndGlyphs" xml:space="preserve" stroke="#2aa02a" stroke-width="0.18">f5:</text>
<text x="215.60" y="343.36" font-family='"Liberation Sans",sans-serif' font-size="9.60" fill="#2aa02a" text-anchor="end" textLength="15.05" lengthAdjust="spacingAndGlyphs" xml:space="preserve" stroke="#2aa02a" stroke-width="0.18">M5:</text>
<path d="M221.70 338.46h5.40l-2.70 4.90z" fill="#000"/>
<text x="340.60" y="343.36" font-family='"Liberation Sans",sans-serif' font-size="9.60" fill="#2aa02a" text-anchor="end" textLength="10.87" lengthAdjust="spacingAndGlyphs" xml:space="preserve" stroke="#2aa02a" stroke-width="0.18">f6:</text>
<text x="465.60" y="343.36" font-family='"Liberation Sans",sans-serif' font-size="9.60" fill="#2aa02a" text-anchor="end" textLength="15.05" lengthAdjust="spacingAndGlyphs" xml:space="preserve" stroke="#2aa02a" stroke-width="0.18">M6:</text>
<path d="M471.70 338.46h5.40l-2.70 4.90z" fill="#000"/>
<text x="32.70" y="355.64" font-family='"Liberation Sans",sans-serif' font-size="10.34" font-weight="bold" fill="#8b0000" text-anchor="start" textLength="65.95" lengthAdjust="spacingAndGlyphs" xml:space="preserve" stroke="#8b0000" stroke-width="0.25">ASSIGNMAT</text>
<text x="215.60" y="355.64" font-family='"Liberation Sans",sans-serif' font-size="9.60" fill="#2aa02a" text-anchor="end" textLength="18.08" lengthAdjust="spacingAndGlyphs" xml:space="preserve" stroke="#2aa02a" stroke-width="0.18">Mat:</text>
<text x="218.60" y="355.64" font-family='"Liberation Sans",sans-serif' font-size="10.34" fill="#000" text-anchor="start" textLength="52.45" lengthAdjust="spacingAndGlyphs" xml:space="preserve" stroke="#000" stroke-width="0.25">BLCKHOLE</text>
<path d="M274.65 350.74h5.40l-2.70 4.90z" fill="#000"/>
<text x="340.60" y="355.64" font-family='"Liberation Sans",sans-serif' font-size="9.60" fill="#2aa02a" text-anchor="end" textLength="18.71" lengthAdjust="spacingAndGlyphs" xml:space="preserve" stroke="#2aa02a" stroke-width="0.18">Reg:</text>
<text x="343.60" y="355.64" font-family='"Liberation Sans",sans-serif' font-size="10.34" fill="#000" text-anchor="start" textLength="13.51" lengthAdjust="spacingAndGlyphs" xml:space="preserve" stroke="#000" stroke-width="0.25">BB</text>
<path d="M360.71 350.74h5.40l-2.70 4.90z" fill="#000"/>
<text x="465.60" y="355.64" font-family='"Liberation Sans",sans-serif' font-size="9.60" fill="#2aa02a" text-anchor="end" textLength="29.55" lengthAdjust="spacingAndGlyphs" xml:space="preserve" stroke="#2aa02a" stroke-width="0.18">to Reg:</text>
<path d="M471.70 350.74h5.40l-2.70 4.90z" fill="#000"/>
<text x="215.60" y="368.52" font-family='"Liberation Sans",sans-serif' font-size="9.60" fill="#2aa02a" text-anchor="end" textLength="50.22" lengthAdjust="spacingAndGlyphs" xml:space="preserve" stroke="#2aa02a" stroke-width="0.18">Mat(Decay):</text>
<path d="M221.70 363.62h5.40l-2.70 4.90z" fill="#000"/>
<text x="340.60" y="368.52" font-family='"Liberation Sans",sans-serif' font-size="9.60" fill="#2aa02a" text-anchor="end" textLength="21.43" lengthAdjust="spacingAndGlyphs" xml:space="preserve" stroke="#2aa02a" stroke-width="0.18">Step:</text>
<text x="465.60" y="368.52" font-family='"Liberation Sans",sans-serif' font-size="9.60" fill="#2aa02a" text-anchor="end" textLength="22.29" lengthAdjust="spacingAndGlyphs" xml:space="preserve" stroke="#2aa02a" stroke-width="0.18">Field:</text>
<path d="M471.70 363.62h5.40l-2.70 4.90z" fill="#000"/>
<text x="32.70" y="381.40" font-family='"Liberation Sans",sans-serif' font-size="10.34" font-weight="bold" fill="#8b0000" text-anchor="start" textLength="65.95" lengthAdjust="spacingAndGlyphs" xml:space="preserve" stroke="#8b0000" stroke-width="0.25">ASSIGNMAT</text>
<text x="215.60" y="381.40" font-family='"Liberation Sans",sans-serif' font-size="9.60" fill="#2aa02a" text-anchor="end" textLength="18.08" lengthAdjust="spacingAndGlyphs" xml:space="preserve" stroke="#2aa02a" stroke-width="0.18">Mat:</text>
<text x="218.60" y="381.40" font-family='"Liberation Sans",sans-serif' font-size="10.34" fill="#000" text-anchor="start" textLength="16.49" lengthAdjust="spacingAndGlyphs" xml:space="preserve" stroke="#000" stroke-width="0.25">AIR</text>
<path d="M238.69 376.50h5.40l-2.70 4.90z" fill="#000"/>
<text x="340.60" y="381.40" font-family='"Liberation Sans",sans-serif' font-size="9.60" fill="#2aa02a" text-anchor="end" textLength="18.71" lengthAdjust="spacingAndGlyphs" xml:space="preserve" stroke="#2aa02a" stroke-width="0.18">Reg:</text>
<text x="343.60" y="381.40" font-family='"Liberation Sans",sans-serif' font-size="10.34" fill="#000" text-anchor="start" textLength="16.49" lengthAdjust="spacingAndGlyphs" xml:space="preserve" stroke="#000" stroke-width="0.25">AIR</text>
<path d="M363.69 376.50h5.40l-2.70 4.90z" fill="#000"/>
<text x="465.60" y="381.40" font-family='"Liberation Sans",sans-serif' font-size="9.60" fill="#2aa02a" text-anchor="end" textLength="29.55" lengthAdjust="spacingAndGlyphs" xml:space="preserve" stroke="#2aa02a" stroke-width="0.18">to Reg:</text>
<path d="M471.70 376.50h5.40l-2.70 4.90z" fill="#000"/>
<text x="215.60" y="394.28" font-family='"Liberation Sans",sans-serif' font-size="9.60" fill="#2aa02a" text-anchor="end" textLength="50.22" lengthAdjust="spacingAndGlyphs" xml:space="preserve" stroke="#2aa02a" stroke-width="0.18">Mat(Decay):</text>
<path d="M221.70 389.38h5.40l-2.70 4.90z" fill="#000"/>
<text x="340.60" y="394.28" font-family='"Liberation Sans",sans-serif' font-size="9.60" fill="#2aa02a" text-anchor="end" textLength="21.43" lengthAdjust="spacingAndGlyphs" xml:space="preserve" stroke="#2aa02a" stroke-width="0.18">Step:</text>
<text x="465.60" y="394.28" font-family='"Liberation Sans",sans-serif' font-size="9.60" fill="#2aa02a" text-anchor="end" textLength="22.29" lengthAdjust="spacingAndGlyphs" xml:space="preserve" stroke="#2aa02a" stroke-width="0.18">Field:</text>
<path d="M471.70 389.38h5.40l-2.70 4.90z" fill="#000"/>
<text x="32.70" y="406.86" font-family='"Liberation Sans",sans-serif' font-size="10.34" font-weight="bold" fill="#8b0000" text-anchor="start" textLength="65.95" lengthAdjust="spacingAndGlyphs" xml:space="preserve" stroke="#8b0000" stroke-width="0.25">ASSIGNMAT</text>
<text x="215.60" y="406.86" font-family='"Liberation Sans",sans-serif' font-size="9.60" fill="#2aa02a" text-anchor="end" textLength="18.08" lengthAdjust="spacingAndGlyphs" xml:space="preserve" stroke="#2aa02a" stroke-width="0.18">Mat:</text>
<text x="218.60" y="406.86" font-family='"Liberation Sans",sans-serif' font-size="10.34" fill="#000" text-anchor="start" textLength="28.60" lengthAdjust="spacingAndGlyphs" xml:space="preserve" stroke="#000" stroke-width="0.25">LaBr3</text>
<path d="M250.80 401.96h5.40l-2.70 4.90z" fill="#000"/>
<text x="340.60" y="406.86" font-family='"Liberation Sans",sans-serif' font-size="9.60" fill="#2aa02a" text-anchor="end" textLength="18.71" lengthAdjust="spacingAndGlyphs" xml:space="preserve" stroke="#2aa02a" stroke-width="0.18">Reg:</text>
<text x="343.60" y="406.86" font-family='"Liberation Sans",sans-serif' font-size="10.34" fill="#000" text-anchor="start" textLength="16.04" lengthAdjust="spacingAndGlyphs" xml:space="preserve" stroke="#000" stroke-width="0.25">SCI</text>
<path d="M363.24 401.96h5.40l-2.70 4.90z" fill="#000"/>
<text x="465.60" y="406.86" font-family='"Liberation Sans",sans-serif' font-size="9.60" fill="#2aa02a" text-anchor="end" textLength="29.55" lengthAdjust="spacingAndGlyphs" xml:space="preserve" stroke="#2aa02a" stroke-width="0.18">to Reg:</text>
<path d="M471.70 401.96h5.40l-2.70 4.90z" fill="#000"/>
<text x="215.60" y="419.74" font-family='"Liberation Sans",sans-serif' font-size="9.60" fill="#2aa02a" text-anchor="end" textLength="50.22" lengthAdjust="spacingAndGlyphs" xml:space="preserve" stroke="#2aa02a" stroke-width="0.18">Mat(Decay):</text>
<path d="M221.70 414.84h5.40l-2.70 4.90z" fill="#000"/>
<text x="340.60" y="419.74" font-family='"Liberation Sans",sans-serif' font-size="9.60" fill="#2aa02a" text-anchor="end" textLength="21.43" lengthAdjust="spacingAndGlyphs" xml:space="preserve" stroke="#2aa02a" stroke-width="0.18">Step:</text>
<text x="465.60" y="419.74" font-family='"Liberation Sans",sans-serif' font-size="9.60" fill="#2aa02a" text-anchor="end" textLength="22.29" lengthAdjust="spacingAndGlyphs" xml:space="preserve" stroke="#2aa02a" stroke-width="0.18">Field:</text>
<path d="M471.70 414.84h5.40l-2.70 4.90z" fill="#000"/>
<text x="32.70" y="432.62" font-family='"Liberation Sans",sans-serif' font-size="10.34" font-weight="bold" fill="#8b0000" text-anchor="start" textLength="59.47" lengthAdjust="spacingAndGlyphs" xml:space="preserve" stroke="#8b0000" stroke-width="0.25">USRTRACK</text>
<text x="340.60" y="432.62" font-family='"Liberation Sans",sans-serif' font-size="9.60" fill="#2aa02a" text-anchor="end" textLength="19.45" lengthAdjust="spacingAndGlyphs" xml:space="preserve" stroke="#2aa02a" stroke-width="0.18">Unit:</text>
<text x="343.60" y="432.62" font-family='"Liberation Sans",sans-serif' font-size="10.34" fill="#000" text-anchor="start" textLength="32.70" lengthAdjust="spacingAndGlyphs" xml:space="preserve" stroke="#000" stroke-width="0.25">22 BIN</text>
<path d="M379.90 427.72h5.40l-2.70 4.90z" fill="#000"/>
<text x="465.60" y="432.62" font-family='"Liberation Sans",sans-serif' font-size="9.60" fill="#2aa02a" text-anchor="end" textLength="26.95" lengthAdjust="spacingAndGlyphs" xml:space="preserve" stroke="#2aa02a" stroke-width="0.18">Name:</text>
<text x="468.60" y="432.62" font-family='"Liberation Sans",sans-serif' font-size="10.34" fill="#000" text-anchor="start" textLength="19.88" lengthAdjust="spacingAndGlyphs" xml:space="preserve" stroke="#000" stroke-width="0.25">trk2</text>
<defs><radialGradient id="ballg" cx="0.35" cy="0.3" r="0.75"><stop offset="0" stop-color="#ffe0e0"/><stop offset="0.15" stop-color="#e87080"/><stop offset="0.45" stop-color="#c83848"/><stop offset="0.8" stop-color="#701820"/><stop offset="1" stop-color="#180404"/></radialGradient></defs>
<path d="M63.5 54.5L68.5 49.5H76.5V57L71.5 61.5H63.5Z" fill="#f08800" stroke="#000" stroke-width="1"/><path d="M72 54.5L76 50V57L72 61Z" fill="#c86a00"/><path d="M64.5 54L69 50H75.5L71.5 54Z" fill="#ffa418"/><path d="M63.5 54.5H71.5L76.5 49.5M71.5 54.5V61.5" fill="none" stroke="#000" stroke-width="1"/><path d="M66 60V56.5H69V58.5H66.5M68 58.5L69.2 60" fill="none" stroke="#b05800" stroke-width="0.8"/>
<ellipse cx="70" cy="108.52000000000001" rx="6.5" ry="3.6" fill="#20a020" stroke="#000" stroke-width="0.8"/><ellipse cx="70" cy="108.02000000000001" rx="4" ry="1.8" fill="#106010"/><path d="M67 108.52000000000001L70 102.52000000000001L73 108.52000000000001Q70 110.02000000000001 67 108.52000000000001Z" fill="#e01010"/>
<ellipse cx="70" cy="134.28" rx="6.5" ry="3.6" fill="#20a020" stroke="#000" stroke-width="0.8"/><ellipse cx="70" cy="133.78" rx="4" ry="1.8" fill="#106010"/><path d="M67 134.28L70 128.28L73 134.28Q70 135.78 67 134.28Z" fill="#e01010"/>
<ellipse cx="70" cy="160.04000000000002" rx="6.5" ry="3.6" fill="#20a020" stroke="#000" stroke-width="0.8"/><ellipse cx="70" cy="159.54000000000002" rx="4" ry="1.8" fill="#106010"/><path d="M67 160.04000000000002L70 154.04000000000002L73 160.04000000000002Q70 161.54000000000002 67 160.04000000000002Z" fill="#e01010"/>
<path d="M22 89.53999999999999L26.4 93.94L22 98.34L17.6 93.94Z" fill="#d83048" stroke="#802030" stroke-width="0.6"/><path d="M22 91.74L24.2 93.94L22 96.14L19.8 93.94Z" fill="#e88090" opacity="0.6"/>
<path d="M22 179.70000000000002L26.4 184.10000000000002L22 188.50000000000003L17.6 184.10000000000002Z" fill="#d83048" stroke="#802030" stroke-width="0.6"/><path d="M22 181.90000000000003L24.2 184.10000000000002L22 186.3L19.8 184.10000000000002Z" fill="#e88090" opacity="0.6"/>
<path d="M17 194.18V198.18L19 200.18M27 194.18V198.18L25 200.18" stroke="#909090" stroke-width="1.3" fill="none"/><circle cx="17" cy="193.98000000000002" r="1" fill="#202020"/><circle cx="27" cy="193.98000000000002" r="1" fill="#202020"/><path d="M22 195.18L26 199.18L22 203.18L18 199.18Z" fill="#e070e0" stroke="#906090" stroke-width="0.5"/>
<circle cx="22.2" cy="211.56" r="5.3" fill="url(#ballg)" stroke="#401010" stroke-width="0.5"/>
<circle cx="22.2" cy="237.32000000000002" r="5.3" fill="url(#ballg)" stroke="#401010" stroke-width="0.5"/>
<circle cx="22.2" cy="275.96000000000004" r="5.3" fill="url(#ballg)" stroke="#401010" stroke-width="0.5"/>
<rect x="17" y="296.02000000000004" width="10.6" height="9.8" fill="#0a0a0a"/><g stroke="#e8c000" stroke-width="1.1" fill="none"><ellipse cx="22.6" cy="302.22" rx="2.6" ry="2"/><path d="M23.5 300.22L25 297.02000000000004M24 298.52000000000004L26.5 298.22M20 302.02000000000004L18 299.52000000000004M21.5 304.02000000000004L20.5 305.52000000000004"/></g><rect x="17" y="302.02000000000004" width="1.3" height="3" fill="#e8d800"/><circle cx="19.5" cy="298.02000000000004" r="0.8" fill="#e07010"/><circle cx="26" cy="303.52000000000004" r="0.8" fill="#e07010"/><circle cx="20" cy="304.02000000000004" r="0.7" fill="#e07010"/>
<path d="M17 354.64L24 346.64L28 350.64L21 357.64H17Z" fill="#f4f4e4" stroke="#a0a090" stroke-width="0.8"/><path d="M24 346.64L28 350.64L21 357.64" fill="none" stroke="#000" stroke-width="1"/><rect x="17.5" y="354.14" width="2" height="1.5" fill="#000"/>
<path d="M17 380.4L24 372.4L28 376.4L21 383.4H17Z" fill="#f4f4e4" stroke="#a0a090" stroke-width="0.8"/><path d="M24 372.4L28 376.4L21 383.4" fill="none" stroke="#000" stroke-width="1"/><rect x="17.5" y="379.9" width="2" height="1.5" fill="#000"/>
<path d="M17 405.86000000000007L24 397.86000000000007L28 401.86000000000007L21 408.86000000000007H17Z" fill="#f4f4e4" stroke="#a0a090" stroke-width="0.8"/><path d="M24 397.86000000000007L28 401.86000000000007L21 408.86000000000007" fill="none" stroke="#000" stroke-width="1"/><rect x="17.5" y="405.36000000000007" width="2" height="1.5" fill="#000"/>
<g fill="#9a0a0a" stroke="#8898a0" stroke-width="0.6"><ellipse cx="22.5" cy="431.12000000000006" rx="4.3" ry="3.2"/><ellipse cx="17.8" cy="428.12000000000006" rx="1.5" ry="2"/><ellipse cx="20.5" cy="425.9200000000001" rx="1.5" ry="2"/><ellipse cx="24.5" cy="425.9200000000001" rx="1.5" ry="2"/><ellipse cx="27.3" cy="428.12000000000006" rx="1.5" ry="2"/></g>
</g>
<g clip-path="url(#tc)">
<text x="15.20" y="463.20" font-family='"Liberation Mono",monospace' font-size="10.81" fill="#000" text-anchor="start" textLength="378.95" lengthAdjust="spacingAndGlyphs" xml:space="preserve" stroke="#000" stroke-width="0.25">associate selected scoring detectors of given estimator type with</text>
<text x="15.20" y="475.80" font-family='"Liberation Mono",monospace' font-size="10.81" fill="#000" text-anchor="start" textLength="139.92" lengthAdjust="spacingAndGlyphs" xml:space="preserve" stroke="#000" stroke-width="0.25">user-defined decay times</text>
<text x="15.20" y="488.40" font-family='"Liberation Mono",monospace' font-size="10.81" fill="#0000ff" text-anchor="start" textLength="460.57" lengthAdjust="spacingAndGlyphs" xml:space="preserve" stroke="#0000ff" stroke-width="0.25">*...+....1....+....2....+....3....+....4....+....5....+....6....+....7....+....</text>
<text x="15.20" y="501.00" font-family='"Liberation Mono",monospace' font-size="10.81" fill="#8b0000" text-anchor="start" textLength="46.64" lengthAdjust="spacingAndGlyphs" xml:space="preserve" stroke="#8b0000" stroke-width="0.25">DCYSCORE</text>
<text x="125.97" y="501.00" font-family='"Liberation Mono",monospace' font-size="10.81" fill="#000" text-anchor="start" textLength="11.66" lengthAdjust="spacingAndGlyphs" xml:space="preserve" stroke="#000" stroke-width="0.25">1.</text>
<text x="283.38" y="501.00" font-family='"Liberation Mono",monospace' font-size="10.81" fill="#000" text-anchor="start" textLength="23.32" lengthAdjust="spacingAndGlyphs" xml:space="preserve" stroke="#000" stroke-width="0.25">trk2</text>
<text x="341.68" y="501.00" font-family='"Liberation Mono",monospace' font-size="10.81" fill="#000" text-anchor="start" textLength="23.32" lengthAdjust="spacingAndGlyphs" xml:space="preserve" stroke="#000" stroke-width="0.25">trk2</text>
<text x="423.30" y="501.00" font-family='"Liberation Mono",monospace' font-size="10.81" fill="#000" text-anchor="start" textLength="46.64" lengthAdjust="spacingAndGlyphs" xml:space="preserve" stroke="#000" stroke-width="0.25">USRTRACK</text>
</g>
<rect x="373" y="451.5" width="16" height="15" fill="#d4d4d4"/>
<path d="M376.60 455.80h9.00l-4.50 8.40z" fill="#000"/>
<rect x="0" y="498" width="197" height="2" fill="#c8c8c8"/>
<rect x="0" y="498" width="16" height="2" fill="#b0b0b0"/>
<rect x="197" y="498" width="470" height="2" fill="#181818"/>
</svg>
</body></html>
